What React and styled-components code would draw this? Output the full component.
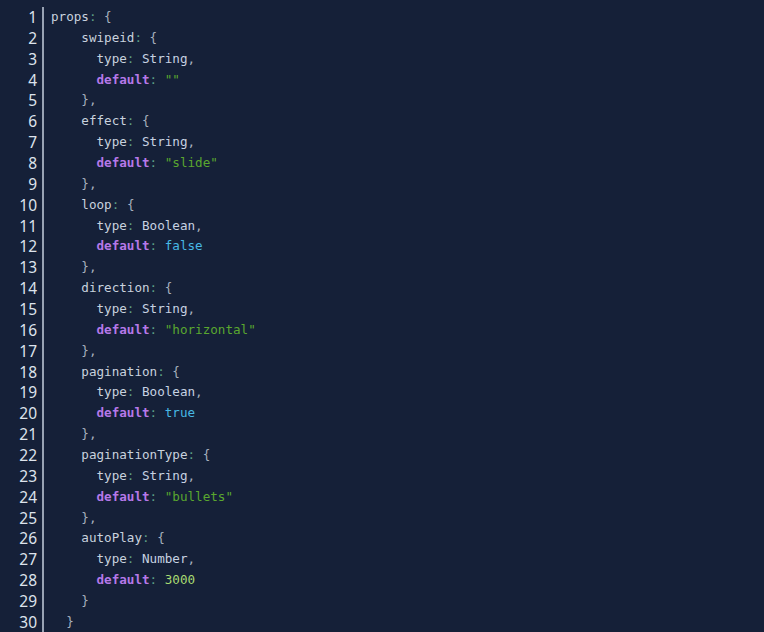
import React from "react";
import styled, { createGlobalStyle } from "styled-components";

const Global = createGlobalStyle`
  html, body {
    margin: 0;
    padding: 0;
    background: #152038;
    overflow: hidden;
  }
`;

const Editor = styled.div`
  display: flex;
  width: 764px;
  height: 632px;
  padding-top: 7px;
  box-sizing: border-box;
  background: #152038;
`;

const Gutter = styled.div`
  width: 37px;
  margin-right: 5px;
  text-align: right;
  font-family: "Noto Sans", "Open Sans", sans-serif;
  font-size: 15.5px;
  color: #dde3ec;
`;

const Code = styled.div`
  flex: 1;
  border-left: 2px solid #98a2b3;
  padding-left: 7px;
  font-family: "DejaVu Sans Mono", monospace;
  font-size: 12.6px;
  color: #c9d2de;
`;

const Row = styled.div`
  height: 20.86px;
  line-height: 20.86px;
  white-space: pre;
`;

const Tok = styled.span`
  font-weight: ${(p) => (p.$k === "kw" ? 700 : 400)};
  color: ${(p) =>
    ({
      punc: "#5c9e84",
      brace: "#a7b0be",
      kw: "#b678e8",
      str: "#5aa72f",
      bool: "#47b8e4",
      num: "#a8db72",
      type: "#c7d2e2",
    })[p.$k] || "inherit"};
`;

const c = <Tok $k="punc">:</Tok>;

const lines = [
  [0, <>props{c} <Tok $k="brace">{"{"}</Tok></>],
];

const prop = (name, type, def, kind) => [
  [4, <>{name}{c} <Tok $k="brace">{"{"}</Tok></>],
  [6, <>type{c} <Tok $k="type">{type}</Tok><Tok $k="brace">,</Tok></>],
  [6, <><Tok $k="kw">default</Tok>{c} <Tok $k={kind}>{def}</Tok></>],
];

const props = [
  ["swipeid", "String", '""', "str"],
  ["effect", "String", '"slide"', "str"],
  ["loop", "Boolean", "false", "bool"],
  ["direction", "String", '"horizontal"', "str"],
  ["pagination", "Boolean", "true", "bool"],
  ["paginationType", "String", '"bullets"', "str"],
  ["autoPlay", "Number", "3000", "num"],
];

props.forEach((p, i) => {
  lines.push(...prop(...p));
  lines.push([4, <Tok $k="brace">{i === props.length - 1 ? "}" : "},"}</Tok>]);
});
lines.push([2, <Tok $k="brace">{"}"}</Tok>]);

export default function App() {
  return (
    <>
      <Global />
      <Editor>
        <Gutter>
          {lines.map((_, i) => (
            <Row key={i}>{i + 1}</Row>
          ))}
        </Gutter>
        <Code>
          {lines.map(([ind, content], i) => (
            <Row key={i}>
              {" ".repeat(ind)}
              {content}
            </Row>
          ))}
        </Code>
      </Editor>
    </>
  );
}
